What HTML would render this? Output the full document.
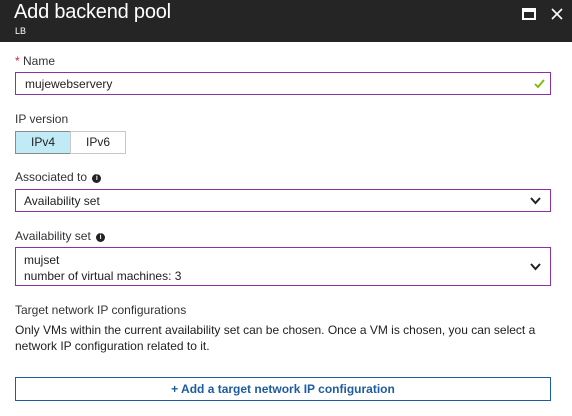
<!DOCTYPE html>
<html><head><style>
*{margin:0;padding:0;box-sizing:border-box}
body{width:572px;height:416px;background:#fff;font-family:"Liberation Sans",sans-serif;color:#1e1e1e;position:relative;overflow:hidden;font-size:12px}
.hdr{position:absolute;left:0;top:0;width:572px;height:42px;background:#252525;color:#fff}
.t{position:absolute;left:14px;top:1px;font-size:20px;font-weight:300;letter-spacing:-0.2px}
.s{position:absolute;left:15px;top:26px;font-size:9px}
.a{position:absolute;left:15px}
.lbl{font-size:12px;color:#333}
.box{position:absolute;left:15px;width:536px;border:1px solid #8a31a3}
.info{display:inline-block;width:9px;height:9px;border-radius:50%;background:#222;color:#fff;font-size:7px;text-align:center;line-height:9px;font-weight:bold;vertical-align:1px;margin-left:2px}
.chev{position:absolute;right:9px}
</style></head><body>
<div class="hdr"><div class="t">Add backend pool</div><div class="s">LB</div>
<div style="position:absolute;left:522px;top:8px;width:14px;height:12px;border:2px solid #fff;border-top-width:4px"></div>
<svg style="position:absolute;left:551px;top:8px" width="12" height="12"><path d="M1 1L11 11M11 1L1 11" stroke="#fff" stroke-width="1.6"/></svg>
</div>
<div class="a lbl" style="top:54px"><span style="color:#e0203a">*</span> Name</div>
<div class="box" style="top:72px;height:23px"><span style="position:absolute;left:9px;top:4px">mujewebservery</span>
<svg style="position:absolute;right:5px;top:6px" width="11" height="9"><path d="M1 5L4 8L10 1" stroke="#7ab800" stroke-width="1.8" fill="none"/></svg></div>
<div class="a lbl" style="top:112px">IP version</div>
<div style="position:absolute;left:15px;top:131px;width:56px;height:23px;background:#c0ebf6;border:1px solid #8a8a8a;text-align:center;line-height:21px">IPv4</div>
<div style="position:absolute;left:70px;top:131px;width:56px;height:23px;border:1px solid #c8c8c8;text-align:center;line-height:21px">IPv6</div>
<div class="a lbl" style="top:170px">Associated to <span class="info">i</span></div>
<div class="box" style="top:189px;height:23px"><span style="position:absolute;left:8px;top:4px">Availability set</span>
<svg class="chev" style="top:7px" width="11" height="8"><path d="M1 1L5.5 6L10 1" stroke="#222" stroke-width="2" fill="none"/></svg></div>
<div class="a lbl" style="top:229px">Availability set <span class="info">i</span></div>
<div class="box" style="top:247px;height:39px"><span style="position:absolute;left:8px;top:4px;line-height:16px">mujset<br>number of virtual machines: 3</span>
<svg class="chev" style="top:15px" width="11" height="8"><path d="M1 1L5.5 6L10 1" stroke="#222" stroke-width="2" fill="none"/></svg></div>
<div class="a lbl" style="top:303px">Target network IP configurations</div>
<div class="a" style="top:322px;line-height:16px;width:545px">Only VMs within the current availability set can be chosen. Once a VM is chosen, you can select a network IP configuration related to it.</div>
<div style="position:absolute;left:15px;top:377px;width:536px;height:24px;border:1px solid #1d5c9f;color:#1d5c9f;text-align:center;line-height:22px;font-weight:bold">+ Add a target network IP configuration</div>
</body></html>
